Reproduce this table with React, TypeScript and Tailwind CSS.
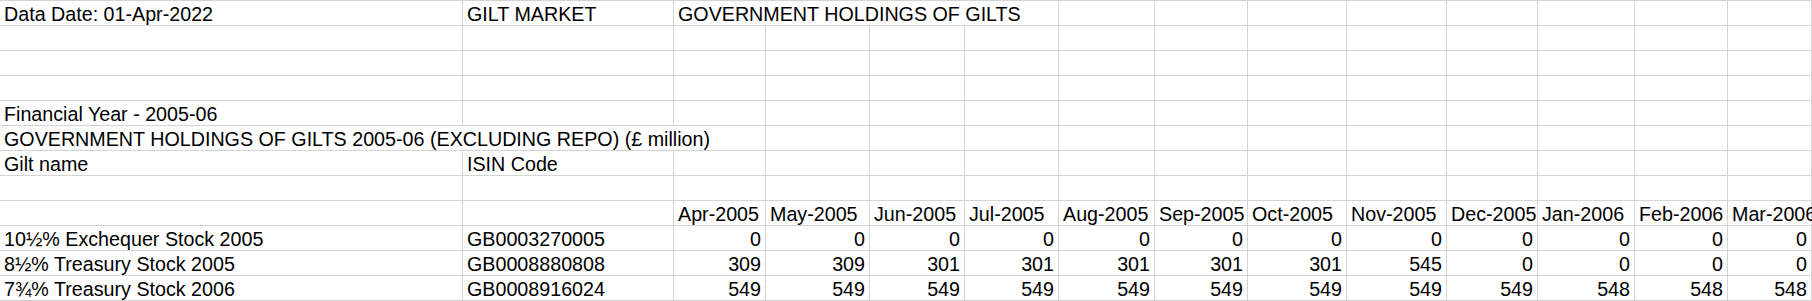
import React from "react";

type Cell = { text?: string; span?: number; right?: boolean };

const months = [
  "Apr-2005",
  "May-2005",
  "Jun-2005",
  "Jul-2005",
  "Aug-2005",
  "Sep-2005",
  "Oct-2005",
  "Nov-2005",
  "Dec-2005",
  "Jan-2006",
  "Feb-2006",
  "Mar-2006",
];

const gilts = [
  { name: "10½% Exchequer Stock 2005", isin: "GB0003270005", values: [0, 0, 0, 0, 0, 0, 0, 0, 0, 0, 0, 0] },
  { name: "8½% Treasury Stock 2005", isin: "GB0008880808", values: [309, 309, 301, 301, 301, 301, 301, 545, 0, 0, 0, 0] },
  { name: "7¾% Treasury Stock 2006", isin: "GB0008916024", values: [549, 549, 549, 549, 549, 549, 549, 549, 549, 548, 548, 548] },
];

const empty = (n: number): Cell[] => Array.from({ length: n }, () => ({}));

const rows: Cell[][] = [
  [
    { text: "Data Date: 01-Apr-2022" },
    { text: "GILT MARKET" },
    { text: "GOVERNMENT HOLDINGS OF GILTS", span: 4 },
    ...empty(8),
  ],
  empty(14),
  empty(14),
  empty(14),
  [{ text: "Financial Year - 2005-06" }, ...empty(13)],
  [{ text: "GOVERNMENT HOLDINGS OF GILTS 2005-06 (EXCLUDING REPO) (£ million)", span: 3 }, ...empty(11)],
  [{ text: "Gilt name" }, { text: "ISIN Code" }, ...empty(12)],
  empty(14),
  [...empty(2), ...months.map((m) => ({ text: m }))],
  ...gilts.map((g) => [
    { text: g.name },
    { text: g.isin },
    ...g.values.map((v) => ({ text: String(v), right: true })),
  ]),
];

const spanClass: Record<number, string> = {
  1: "col-span-1",
  3: "col-span-3",
  4: "col-span-4",
};

export default function App() {
  return (
    <div className="h-[301px] w-[1812px] overflow-hidden bg-white">
      <div
        className="grid auto-rows-[25px] grid-cols-[463px_211px_92px_104px_95px_94px_96px_93px_99px_100px_91px_97px_93px_84px] border-b border-[#d4d4d4] text-[19.7px] leading-[26px] text-black"
        style={{ fontFamily: '"Liberation Sans", Arial, sans-serif' }}
      >
        {rows.map((row, r) =>
          row.map((cell, c) => (
            <div
              key={`${r}-${c}`}
              className={`${spanClass[cell.span ?? 1]} whitespace-nowrap border-t border-r border-[#d4d4d4] ${
                cell.right ? "pr-[4px] text-right" : "pl-[4px]"
              }`}
            >
              {cell.text}
            </div>
          ))
        )}
      </div>
    </div>
  );
}
